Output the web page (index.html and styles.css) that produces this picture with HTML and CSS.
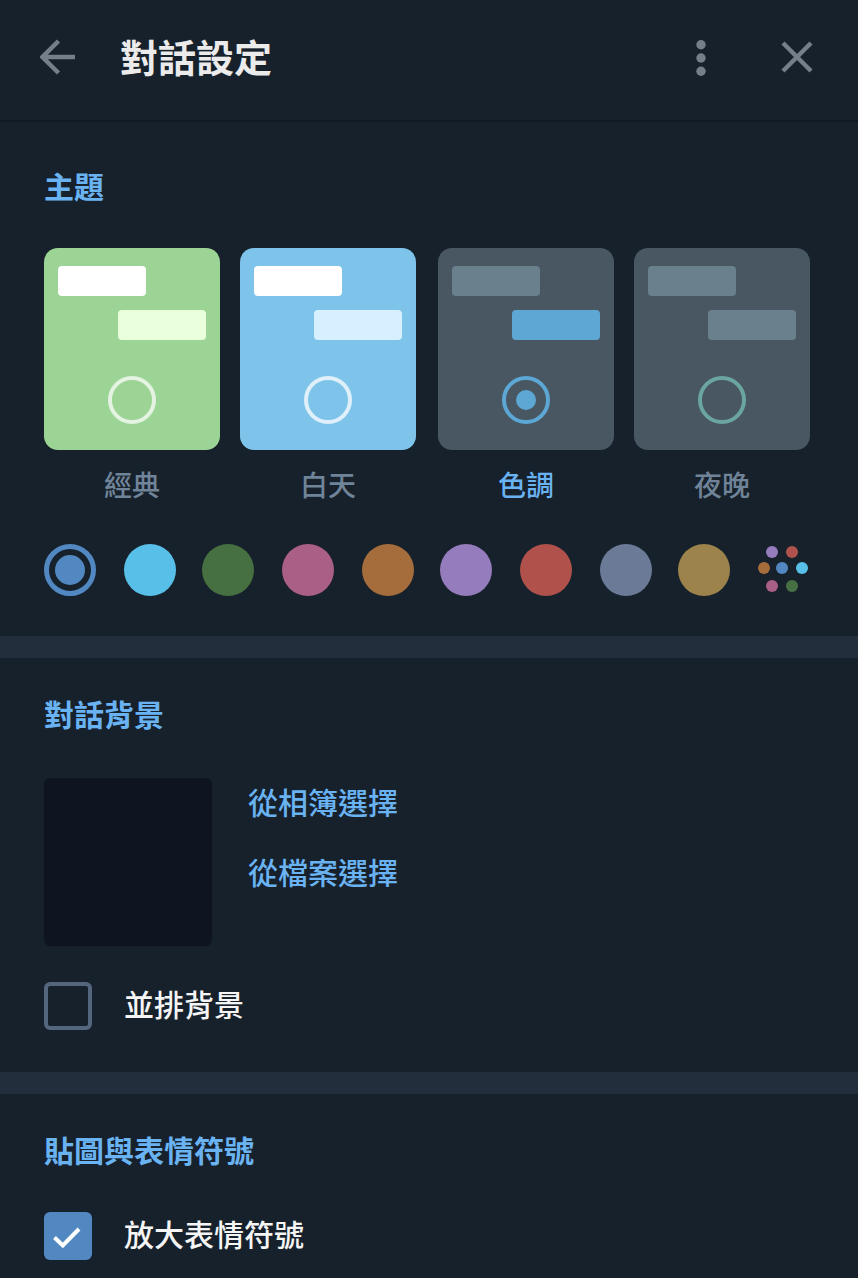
FILE: index.html
```html
<!DOCTYPE html>
<html lang="zh-Hant">
<head>
<meta charset="utf-8">
<title>對話設定</title>
<link rel="stylesheet" href="styles.css">
</head>
<body>
<div class="panel">
  <header class="header">
    <svg class="icon-back" width="36" height="36" viewBox="0 0 36 36"><path d="M35 18H3M18.500 2L2.500 18L18.500 34"/></svg>
    <h1 class="title">對話設定</h1>
    <svg class="icon-more" width="10" height="36" viewBox="0 0 10 36"><circle cx="5" cy="4.800" r="4.700"/><circle cx="5" cy="18" r="4.700"/><circle cx="5" cy="31.200" r="4.700"/></svg>
    <svg class="icon-close" width="32" height="32" viewBox="0 0 32 32"><path d="M2 2L30 30M30 2L2 30"/></svg>
  </header>

  <section class="section section-theme">
    <h2 class="heading">主題</h2>
    <div class="themes">
      <div class="theme classic"><div class="card"><i class="bubble in"></i><i class="bubble out"></i><i class="radio"></i></div><span class="label">經典</span></div>
      <div class="theme day"><div class="card"><i class="bubble in"></i><i class="bubble out"></i><i class="radio"></i></div><span class="label">白天</span></div>
      <div class="theme tinted selected"><div class="card"><i class="bubble in"></i><i class="bubble out"></i><i class="radio"></i></div><span class="label">色調</span></div>
      <div class="theme night"><div class="card"><i class="bubble in"></i><i class="bubble out"></i><i class="radio"></i></div><span class="label">夜晚</span></div>
    </div>
    <div class="colors">
      <i class="dot blue active"></i>
      <i class="dot cyan"></i>
      <i class="dot green"></i>
      <i class="dot pink"></i>
      <i class="dot orange"></i>
      <i class="dot purple"></i>
      <i class="dot red"></i>
      <i class="dot slate"></i>
      <i class="dot gold"></i>
      <svg width="52" height="52" viewBox="0 0 52 52">
        <circle cx="14" cy="8" r="6" fill="#957cbd"/><circle cx="34" cy="8" r="6" fill="#b0524b"/>
        <circle cx="6" cy="24" r="6" fill="#a56d3b"/><circle cx="24" cy="24" r="6" fill="#5288c1"/><circle cx="44" cy="24" r="6" fill="#58bfe8"/>
        <circle cx="14" cy="42" r="6" fill="#aa5f87"/><circle cx="34" cy="42" r="6" fill="#467041"/>
      </svg>
    </div>
  </section>

  <div class="divider"></div>

  <section class="section section-background">
    <h2 class="heading">對話背景</h2>
    <div class="background">
      <div class="preview"></div>
      <div class="links"><a class="link">從相簿選擇</a><a class="link">從檔案選擇</a></div>
    </div>
    <label class="option"><span class="checkbox"></span><span class="option-text">並排背景</span></label>
  </section>

  <div class="divider"></div>

  <section class="section section-stickers">
    <h2 class="heading">貼圖與表情符號</h2>
    <label class="option"><span class="checkbox checked"><svg width="48" height="48" viewBox="0 0 48 48"><path d="M10.500 25.500L18.800 33.500L35 17"/></svg></span><span class="option-text">放大表情符號</span></label>
  </section>
</div>
</body>
</html>
```
FILE: styles.css
```css
* { box-sizing: border-box; }
body {
  margin: 0;
  background: #17212b;
  color: #f5f5f5;
  font-family: "Noto Sans CJK TC", sans-serif;
  font-size: 30px;
  font-weight: 500;
  line-height: 30px;
}
svg { display: block; }
.panel { width: 858px; height: 1278px; overflow: hidden; }

.header {
  height: 122px;
  padding: 0 45px 8px 40px;
  display: flex;
  align-items: center;
  border-bottom: 2px solid #101922;
}
.icon-back, .icon-close { margin-top: 2px; fill: none; stroke: #747f89; stroke-width: 4.500; }
.icon-more { fill: #747f89; margin: 4px 75px 0 0; }
.title { margin: 0 auto 0 44px; font-size: 38px; line-height: 38px; font-weight: 700; color: #ebebeb; }

.section { padding-left: 44px; }
.section-theme { height: 514px; padding-top: 48px; }
.section-background { height: 414px; padding-top: 40px; }
.section-stickers { padding-top: 40px; }
.heading { margin: 0; font-size: 30px; line-height: 30px; font-weight: 700; color: #6ab3f3; }

.themes { display: grid; grid-template-columns: 196px 198px 196px 176px; margin-top: 48px; }
.theme { width: 176px; text-align: center; }
.card {
  height: 202px;
  padding: 18px 14px;
  border-radius: 14px;
  background: var(--bg);
  display: flex;
  flex-direction: column;
}
.bubble { width: 88px; height: 30px; border-radius: 4px; }
.in { background: var(--in); }
.out { margin-top: 14px; align-self: flex-end; background: var(--out); }
.radio {
  width: 48px;
  height: 48px;
  margin-top: 36px;
  align-self: center;
  border: 4px solid var(--radio);
  border-radius: 50%;
}
.selected .radio { padding: 10px; background: var(--radio) content-box; }
.label { display: block; margin-top: 20px; font-size: 28px; line-height: 28px; color: #708499; }
.selected .label { color: #6ab3f3; }
.classic { --bg: #9bd494; --in: #fff; --out: #eaffdc; --radio: #e5f3e2; }
.day { --bg: #7ec4ea; --in: #fff; --out: #d7f0ff; --radio: #e0f0fa; }
.tinted { --bg: #485761; --in: #6b808d; --out: #5ca7d4; --radio: #5ca7d4; }
.night { --bg: #485761; --in: #6b808d; --out: #6b808d; --radio: #6aa69f; }

.colors { display: grid; grid-template-columns: 80px 78px 80px 80px 78px 80px 80px 78px 80px 52px; margin-top: 46px; }
.dot { width: 52px; height: 52px; border-radius: 50%; background: var(--c); }
.active { border: 5px solid var(--c); padding: 6px; background: none; display: flex; }
.active::after { content: ""; flex: 1; border-radius: 50%; background: var(--c); }
.blue { --c: #5288c1; }
.cyan { --c: #58bfe8; }
.green { --c: #467041; }
.pink { --c: #aa5f87; }
.orange { --c: #a56d3b; }
.purple { --c: #957cbd; }
.red { --c: #b0524b; }
.slate { --c: #6b7b97; }
.gold { --c: #9c834b; }

.divider { height: 22px; background: #232e3c; }

.background { display: flex; gap: 36px; margin-top: 50px; }
.preview { width: 168px; height: 168px; border-radius: 6px; background: #0e1520; }
.links { display: flex; flex-direction: column; gap: 40px; padding-top: 8px; }
.link { color: #6ab3f3; }

.option { display: flex; align-items: center; gap: 32px; margin-top: 36px; }
.section-stickers .option { margin-top: 48px; }
.checkbox { width: 48px; height: 48px; border: 4px solid #53667d; border-radius: 6px; }
.checked { border: 0; background: #5288c1; }
.checked svg { fill: none; stroke: #fff; stroke-width: 4; }
.option-text { padding-bottom: 6px; }
```
